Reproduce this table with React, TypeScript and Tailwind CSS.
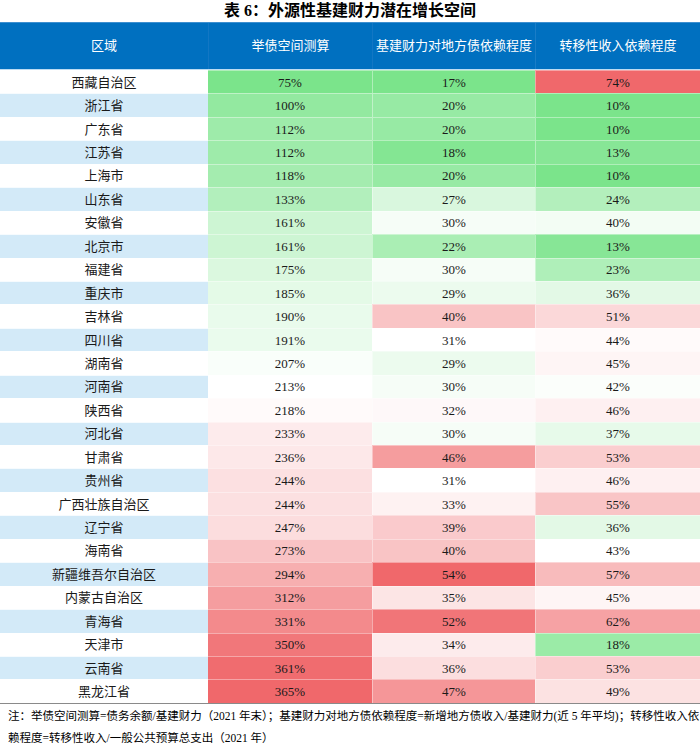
import React from "react";

type Row = [string, number, number, number];

const rows: Row[] = [
  ["西藏自治区", 75, 17, 74],
  ["浙江省", 100, 20, 10],
  ["广东省", 112, 20, 10],
  ["江苏省", 112, 18, 13],
  ["上海市", 118, 20, 10],
  ["山东省", 133, 27, 24],
  ["安徽省", 161, 30, 40],
  ["北京市", 161, 22, 13],
  ["福建省", 175, 30, 23],
  ["重庆市", 185, 29, 36],
  ["吉林省", 190, 40, 51],
  ["四川省", 191, 31, 44],
  ["湖南省", 207, 29, 45],
  ["河南省", 213, 30, 42],
  ["陕西省", 218, 32, 46],
  ["河北省", 233, 30, 37],
  ["甘肃省", 236, 46, 53],
  ["贵州省", 244, 31, 46],
  ["广西壮族自治区", 244, 33, 55],
  ["辽宁省", 247, 39, 36],
  ["海南省", 273, 40, 43],
  ["新疆维吾尔自治区", 294, 54, 57],
  ["内蒙古自治区", 312, 35, 45],
  ["青海省", 331, 52, 62],
  ["天津市", 350, 34, 18],
  ["云南省", 361, 36, 53],
  ["黑龙江省", 365, 47, 49],
];

const GREEN = [123, 228, 139];
const RED = [240, 104, 107];

function scale(v: number, min: number, mid: number, max: number): string {
  let c: number[];
  if (v <= mid) {
    const t = (mid - v) / (mid - min);
    c = GREEN.map((g) => Math.round(255 + (g - 255) * t));
  } else {
    const t = (v - mid) / (max - mid);
    c = RED.map((r) => Math.round(255 + (r - 255) * t));
  }
  return `rgb(${c[0]},${c[1]},${c[2]})`;
}

const font = { fontFamily: '"Liberation Serif", "Noto Sans CJK SC", serif' };

export default function App() {
  return (
    <div className="w-[700px] h-[746px] bg-white overflow-hidden text-[#1a1a1a]" style={font}>
      <div
        className="h-[22px] flex items-center justify-center text-[16px] font-bold text-black"
        style={{ fontFamily: '"Liberation Serif", "Noto Sans CJK SC", sans-serif' }}
      >
        表 6：外源性基建财力潜在增长空间
      </div>
      <div className="grid grid-cols-[208px_164px_163px_165px] h-[48px] bg-[#0070c0] border-t border-[#3d8fd0] border-b border-b-[#bcdcf3] text-white text-[13px]">
        <div className="flex items-center justify-center">区域</div>
        <div className="flex items-center justify-center border-l border-[#1277c4]">举债空间测算</div>
        <div className="flex items-center justify-center border-l border-[#1277c4]">基建财力对地方债依赖程度</div>
        <div className="flex items-center justify-center border-l border-[#1a7dc7]">转移性收入依赖程度</div>
      </div>
      <div className="flex flex-col border-b border-[#8a8a8a]">
        {rows.map(([name, a, b, c], i) => (
          <div
            key={name}
            className="grid grid-cols-[208px_164px_163px_165px] h-[23.45px] text-[13px] leading-none"
          >
            <div
              className={`flex items-center justify-center border-t border-white/80 ${
                i % 2 === 1 ? "bg-[#d3eaf8]" : "bg-white"
              }`}
            >
              {name}
            </div>
            <div
              className="flex items-center justify-center border-t border-white/40"
              style={{ backgroundColor: scale(a, 75, 213, 365) }}
            >
              {a}%
            </div>
            <div
              className="flex items-center justify-center border-t border-l border-white/40"
              style={{ backgroundColor: scale(b, 17, 31, 54) }}
            >
              {b}%
            </div>
            <div
              className="flex items-center justify-center border-t border-l border-white/40"
              style={{ backgroundColor: scale(c, 10, 43, 74) }}
            >
              {c}%
            </div>
          </div>
        ))}
      </div>
      <div className="px-[8px] pt-[1px] text-[11.5px] leading-[22px] text-black whitespace-nowrap">
        <div>
          注：举债空间测算=债务余额/基建财力（2021 年末）；基建财力对地方债依赖程度=新增地方债收入/基建财力(近 5 年平均)；转移性收入依
        </div>
        <div>赖程度=转移性收入/一般公共预算总支出（2021 年）</div>
      </div>
    </div>
  );
}
